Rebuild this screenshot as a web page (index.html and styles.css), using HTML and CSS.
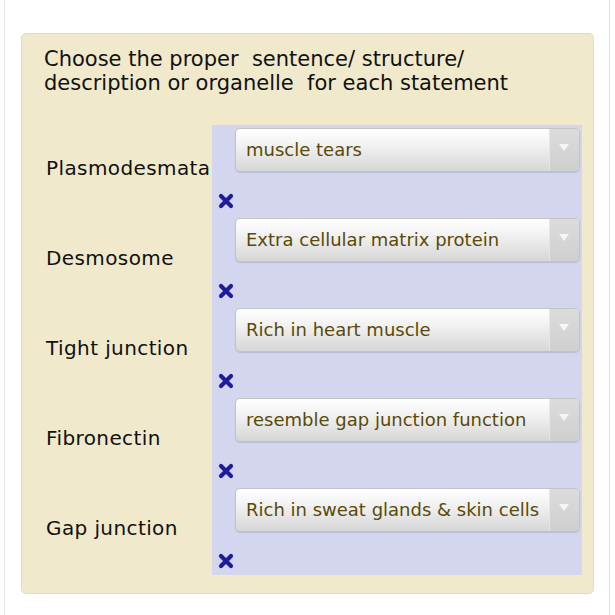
FILE: index.html
```html
<!DOCTYPE html>
<html>
<head>
<meta charset="utf-8">
<link rel="stylesheet" href="styles.css">
</head>
<body>
<div class="frame">
  <div class="panel">
    <p class="prompt">Choose the proper&nbsp; sentence/ structure/<br>description or organelle&nbsp; for each statement</p>
    <div class="match">
      <div class="terms">
        <div class="term">Plasmodesmata</div>
        <div class="term">Desmosome</div>
        <div class="term">Tight junction</div>
        <div class="term">Fibronectin</div>
        <div class="term">Gap junction</div>
      </div>
      <div class="answers">
        <div class="answer">
          <div class="select"><span class="value">muscle tears</span><span class="arrow"></span></div>
          <svg class="mark" viewBox="0 0 16 16"><path d="M3 3L13 13M13 3L3 13"/></svg>
        </div>
        <div class="answer">
          <div class="select"><span class="value">Extra cellular matrix protein</span><span class="arrow"></span></div>
          <svg class="mark" viewBox="0 0 16 16"><path d="M3 3L13 13M13 3L3 13"/></svg>
        </div>
        <div class="answer">
          <div class="select"><span class="value">Rich in heart muscle</span><span class="arrow"></span></div>
          <svg class="mark" viewBox="0 0 16 16"><path d="M3 3L13 13M13 3L3 13"/></svg>
        </div>
        <div class="answer">
          <div class="select"><span class="value">resemble gap junction function</span><span class="arrow"></span></div>
          <svg class="mark" viewBox="0 0 16 16"><path d="M3 3L13 13M13 3L3 13"/></svg>
        </div>
        <div class="answer">
          <div class="select"><span class="value">Rich in sweat glands &amp; skin cells</span><span class="arrow"></span></div>
          <svg class="mark" viewBox="0 0 16 16"><path d="M3 3L13 13M13 3L3 13"/></svg>
        </div>
      </div>
    </div>
  </div>
</div>
</body>
</html>
```
FILE: styles.css
```css
html, body {
  margin: 0;
  padding: 0;
  background: #fff;
}

body {
  font-family: "DejaVu Sans", Verdana, sans-serif;
  color: #111;
}

.frame {
  margin-left: 4px;
  width: 606px;
  height: 615px;
  border-left: 1px solid #e2e2e2;
  border-right: 1px solid #e2e2e2;
  padding: 33px 0 0 16px;
  box-sizing: border-box;
}

.panel {
  width: 573px;
  height: 561px;
  box-sizing: border-box;
  background: #f0e9cb;
  border: 1px solid #e3dbbb;
  border-radius: 5px;
  padding: 13px 11px 0 22px;
}

.prompt {
  margin: 0;
  font-size: 21px;
  line-height: 24px;
  color: #111;
}

.match {
  display: flex;
  margin-top: 30px;
}

.terms {
  width: 168px;
  display: flex;
  flex-direction: column;
}

.term {
  height: 90px;
  display: flex;
  align-items: center;
  padding-left: 2px;
  padding-bottom: 5px;
  box-sizing: border-box;
  font-size: 20px;
  letter-spacing: 0.4px;
}

.answers {
  width: 370px;
  background: #d4d6f0;
  display: flex;
  flex-direction: column;
}

.answer {
  height: 90px;
  display: flex;
  flex-direction: column;
  padding: 3px 2px 0 6px;
  box-sizing: border-box;
}

.select {
  margin-left: 17px;
  height: 44px;
  box-sizing: border-box;
  display: flex;
  border: 1px solid #c3c3c3;
  border-radius: 5px;
  background: linear-gradient(#ffffff, #f1f1f1 40%, #d6d6d6);
  box-shadow: 0 1px 1px rgba(0, 0, 0, 0.12);
  overflow: hidden;
}

.value {
  flex: 1;
  padding: 11px 0 0 10px;
  font-size: 18px;
  line-height: 20px;
  color: #5a4a07;
  white-space: nowrap;
}

.arrow {
  width: 29px;
  position: relative;
  border-left: 1px solid #e6e6e6;
  background: linear-gradient(#dcdcdc, #cfcfcf);
}

.arrow::after {
  content: "";
  position: absolute;
  left: 9px;
  top: 15px;
  border-left: 5px solid transparent;
  border-right: 5px solid transparent;
  border-top: 7px solid #f6f6f6;
}

.mark {
  margin-top: 21px;
  width: 16px;
  height: 16px;
  fill: none;
  stroke: #1e1b9c;
  stroke-width: 4.2;
  stroke-linecap: round;
}
```
